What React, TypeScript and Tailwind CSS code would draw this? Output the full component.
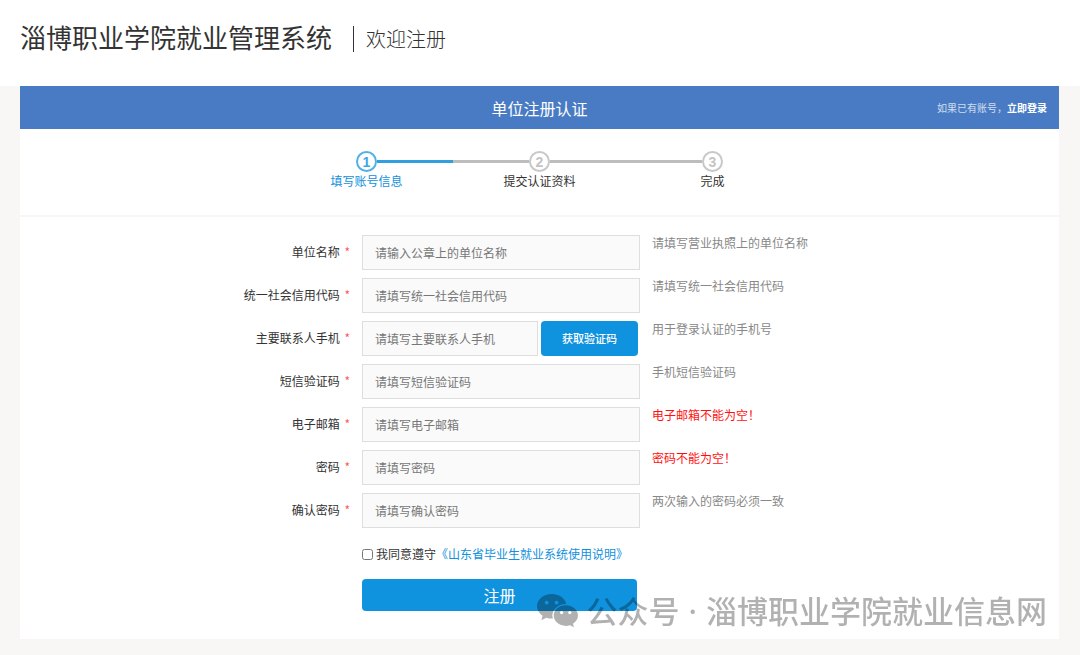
import { useState } from "react";
import clsx from "clsx";

const steps = ["填写账号信息", "提交认证资料", "完成"];

const fields = [
  { id: "company", label: "单位名称", placeholder: "请输入公章上的单位名称", hint: "请填写营业执照上的单位名称" },
  { id: "creditCode", label: "统一社会信用代码", placeholder: "请填写统一社会信用代码", hint: "请填写统一社会信用代码" },
  { id: "phone", label: "主要联系人手机", placeholder: "请填写主要联系人手机", hint: "用于登录认证的手机号", type: "tel", sendCode: true },
  { id: "smsCode", label: "短信验证码", placeholder: "请填写短信验证码", hint: "手机短信验证码" },
  { id: "email", label: "电子邮箱", placeholder: "请填写电子邮箱", hint: "电子邮箱不能为空！", type: "email", error: true },
  { id: "password", label: "密码", placeholder: "请填写密码", hint: "密码不能为空！", type: "password", error: true },
  { id: "confirm", label: "确认密码", placeholder: "请填写确认密码", hint: "两次输入的密码必须一致", type: "password" },
];

function Steps({ current }: { current: number }) {
  return (
    <ol className="flex justify-center border-b-2 border-[#f7f7f7] pt-[22px] pb-[25px]">
      {steps.map((name, i) => {
        const active = i === current;
        const line = active ? "bg-[#2f9fe0]" : "bg-[#bdbdbd]";
        return (
          <li key={name} className="w-[173px] text-center">
            <div className="flex items-center">
              <span className={clsx("h-[3px] flex-1", i > 0 && line)} />
              <span
                className={clsx(
                  "flex size-[21px] items-center justify-center rounded-full border-2 font-['Liberation_Sans',sans-serif] text-sm font-bold",
                  active ? "border-[#52b0e6] text-[#3fa6e2]" : "border-[#c8c8c8] text-[#c4c4c4]"
                )}
              >
                {i + 1}
              </span>
              <span className={clsx("h-[3px] flex-1", i < steps.length - 1 && line)} />
            </div>
            <div className={clsx("leading-[18px]", active ? "text-[#1090dd]" : "text-[#333]")}>{name}</div>
          </li>
        );
      })}
    </ol>
  );
}

function Watermark() {
  return (
    <div className="pointer-events-none absolute right-3 bottom-[6px] flex items-center text-black opacity-30">
      <svg className="mr-2 h-[34px] w-[41px]" viewBox="0 0 41 34" fill="currentColor" aria-hidden="true">
        <defs>
          <mask id="back-bubble">
            <rect width="41" height="34" fill="white" />
            <circle cx="9.7" cy="8.6" r="1.9" fill="black" />
            <circle cx="19.6" cy="8.6" r="1.9" fill="black" />
            <ellipse cx="28.8" cy="21.6" rx="13.5" ry="11.6" fill="black" />
          </mask>
          <mask id="front-bubble">
            <rect width="41" height="34" fill="white" />
            <circle cx="24.6" cy="18.6" r="1.6" fill="black" />
            <circle cx="32.8" cy="18.6" r="1.6" fill="black" />
          </mask>
        </defs>
        <path
          mask="url(#back-bubble)"
          d="M14.8 0C6.6 0 0 5.5 0 12.3c0 3.9 2.1 7.2 5.5 9.5l-1.1 4.4 4.9-2.5c1.7.6 3.6.9 5.5.9 8.2 0 14.8-5.5 14.8-12.3S23 0 14.8 0z"
        />
        <path
          mask="url(#front-bubble)"
          d="M28.8 11.3c-6.7 0-12.1 4.6-12.1 10.3s5.4 10.3 12.1 10.3c1.5 0 2.900-.2 4.2-.6l3.9 2-.9-3.600c3-1.900 5-4.800 5-8.100 0-5.700-5.500-10.300-12.200-10.300z"
        />
      </svg>
      <span className="text-[31px] leading-[44px] font-medium whitespace-nowrap">
        公众号
        <span className="mx-[1px] font-['Noto_Sans',sans-serif]"> · </span>
        淄博职业学院就业信息网
      </span>
    </div>
  );
}

export default function App() {
  const [agreed, setAgreed] = useState(false);

  return (
    <div className="min-h-screen bg-[#f8f7f6] pb-4 font-['Noto_Sans_CJK_SC',sans-serif] text-xs text-[#333]">
      <header className="flex items-center bg-white px-5 pt-[19px] pb-[27px]">
        <h1 className="pb-1 text-[26px] leading-9">淄博职业学院就业管理系统</h1>
        <div className="ml-[21px] flex h-[26px] items-center border-l border-[#333] pl-3 text-xl font-light">欢迎注册</div>
      </header>

      <main className="relative mr-[21px] ml-5 bg-white">
        <div className="grid h-[43px] grid-cols-[1fr_auto_1fr] items-center bg-[#497bc4] text-white">
          <h2 className="col-start-2 text-base">单位注册认证</h2>
          <p className="pr-3 text-right text-[10px] text-white/75">
            如果已有账号，
            <a href="#login" className="font-bold text-white">
              立即登录
            </a>
          </p>
        </div>

        <Steps current={0} />

        <form className="flex flex-col gap-2 pt-[18px] pb-7" onSubmit={(e) => e.preventDefault()}>
          {fields.map((f) => (
            <div key={f.id} className="grid grid-cols-[342fr_278px_419fr] items-center">
              <label htmlFor={f.id} className="pr-3 pb-[2px] text-right">
                {f.label} <span className="ml-[2px] text-[#ff5a5a]">*</span>
              </label>
              <div className={clsx("flex gap-[3px]", f.sendCode && "pr-[2px]")}>
                <input
                  id={f.id}
                  type={f.type ?? "text"}
                  placeholder={f.placeholder}
                  className="h-[35px] min-w-0 flex-1 border border-[#dedede] bg-[#fafafa] px-3 placeholder:text-[#777]"
                />
                {f.sendCode && (
                  <button type="button" className="w-[97px] rounded bg-[#1093df] text-[11px] font-medium text-white">
                    获取验证码
                  </button>
                )}
              </div>
              <span className={clsx("self-start pl-3 leading-4", f.error ? "text-[#ff1010]" : "text-[#888]")}>
                {f.hint}
              </span>
            </div>
          ))}

          <div className="grid grid-cols-[342fr_278px_419fr] pt-[10px]">
            <div className="col-start-2">
              <div className="flex items-center whitespace-nowrap">
                <input
                  id="agree"
                  type="checkbox"
                  checked={agreed}
                  onChange={(e) => setAgreed(e.target.checked)}
                  className="mr-[3px] size-[11px]"
                />
                <label htmlFor="agree">我同意遵守</label>
                <a href="#terms" className="text-[#1090dd]">
                  《山东省毕业生就业系统使用说明》
                </a>
              </div>
              <button type="submit" className="mt-[17px] h-8 w-[275px] rounded bg-[#1093df] text-base text-white">
                注册
              </button>
            </div>
          </div>
        </form>

        <Watermark />
      </main>
    </div>
  );
}
